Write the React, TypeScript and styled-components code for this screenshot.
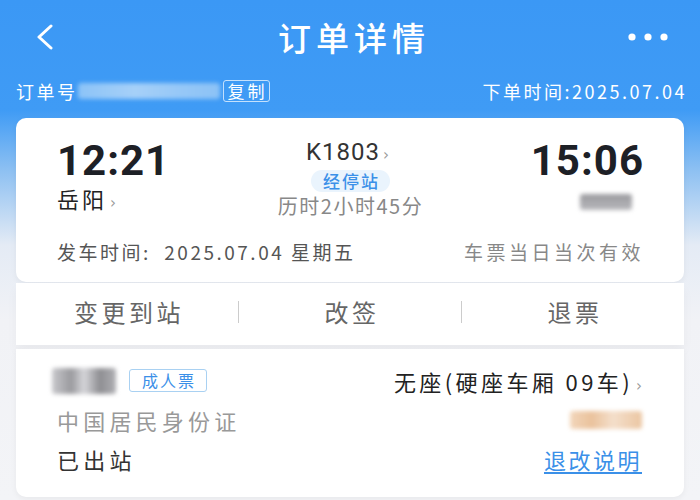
import * as React from 'react';
import styled, { createGlobalStyle } from 'styled-components';

// *** Global ***
const Global = createGlobalStyle`
    html, body {
        margin: 0;
        padding: 0;
    }
    body {
        width: 700px;
        height: 500px;
        overflow: hidden;
        font-family: "Noto Sans CJK SC", "Noto Sans", sans-serif;
        background: linear-gradient(180deg, #3b98f5 0px, #3f9bf5 110px, #8dc0f2 170px, #e4ebf5 245px, #f1f2f6 320px, #f3f4f7 500px);
    }
`

// *** Styled Components ***
const Page = styled.div`
    width: 700px;
    height: 500px;
    display: flex;
    flex-direction: column;
`
const NavBar = styled.div`
    height: 74px;
    display: flex;
    align-items: center;
    justify-content: space-between;
    padding: 0 32px 0 34px;
    color: #fff;
`
const NavTitle = styled.div`
    font-size: 33px;
    font-weight: 500;
    letter-spacing: 5px;
    margin-left: 6px;
`
const NavIcon = styled.div`
    width: 40px;
    display: flex;
    align-items: center;
`
const OrderBar = styled.div`
    height: 34px;
    padding: 0 13px 0 16px;
    display: flex;
    align-items: center;
    justify-content: space-between;
    color: #fff;
    font-size: 18px;
    letter-spacing: 2.5px;
`
const OrderNo = styled.div`
    display: flex;
    align-items: center;
    letter-spacing: 2.5px;
`
const Blur = styled.div<{ $w: number; $h: number; $bg: string }>`
    width: ${p => p.$w}px;
    height: ${p => p.$h}px;
    background: ${p => p.$bg};
    filter: blur(2px);
    border-radius: 3px;
`
const CopyTag = styled.span`
    border: 1px solid rgba(255,255,255,0.7);
    border-radius: 3px;
    font-size: 17px;
    line-height: 20px;
    padding: 0 1px 0 4px;
    margin-left: 3px;
    letter-spacing: 3px;
`
const Card = styled.div`
    margin: 10px 16px 0;
    background: #fff;
    border-radius: 10px;
    box-shadow: 0 2px 6px rgba(0,0,0,0.05);
`
const TripCard = styled(Card)`
    height: 164px;
    padding: 22px 40px 0 41px;
    box-sizing: border-box;
`
const TripRow = styled.div`
    display: grid;
    grid-template-columns: 1fr 1fr 1fr;
    align-items: start;
`
const Station = styled.div<{ $right?: boolean }>`
    display: flex;
    flex-direction: column;
    align-items: ${p => (p.$right ? 'flex-end' : 'flex-start')};
`
const Time = styled.div`
    font-family: Roboto, "Noto Sans", sans-serif;
    font-size: 42px;
    font-weight: 700;
    color: #1d2026;
    line-height: 42px;
    letter-spacing: 1px;
`
const StationName = styled.div`
    font-size: 22px;
    letter-spacing: 3px;
    color: #222;
    margin-top: 2px;
    line-height: 28px;
`
const Arrow = styled.span`
    font-size: 15px;
    color: #999;
    margin-left: 3px;
    letter-spacing: 0;
    font-family: "DejaVu Sans", sans-serif;
`
const Middle = styled.div`
    display: flex;
    flex-direction: column;
    align-items: center;
    margin-top: -2px;
`
const TrainNo = styled.div`
    font-family: Roboto, "Noto Sans", sans-serif;
    font-size: 24px;
    color: #333;
    line-height: 28px;
    margin-right: 6px;
    letter-spacing: 1px;
`
const StopTag = styled.div`
    margin-top: 1px;
    font-size: 17px;
    font-weight: 500;
    letter-spacing: 2px;
    color: #3b90e8;
    background: #eaf4fd;
    border-radius: 11px;
    padding: 0 10px 0 12px;
    line-height: 22px;
`
const Duration = styled.div`
    font-size: 20px;
    letter-spacing: 1.5px;
    color: #888;
    margin-top: 0;
    line-height: 28px;
`
const InfoRow = styled.div`
    display: flex;
    justify-content: space-between;
    margin-top: 18px;
    font-size: 19px;
    letter-spacing: 2.5px;
    color: #555;
`
const Muted = styled.span`
    color: #888;
    letter-spacing: 3.5px;
`
const ActionBar = styled.div`
    margin: 1px 16px 0;
    height: 62px;
    background: #fff;
    display: flex;
    align-items: center;
    box-shadow: 0 6px 10px rgba(0,0,0,0.04);
`
const Action = styled.div`
    flex: 1;
    text-align: center;
    font-size: 24px;
    letter-spacing: 3.5px;
    color: #666;
    padding-left: 4px;
    margin-top: -6px;
`
const Divider = styled.div`
    width: 1px;
    height: 22px;
    background: #ccc;
    margin-top: -4px;
`
const PassengerCard = styled(Card)`
    margin-top: 4px;
    height: 148px;
    padding: 12px 42px 0 41px;
    box-sizing: border-box;
    border-radius: 0 0 10px 10px;
`
const PRow = styled.div`
    display: flex;
    justify-content: space-between;
    align-items: center;
    height: 39px;
    font-size: 22px;
    letter-spacing: 4.2px;
`
const NameBox = styled.div`
    display: flex;
    align-items: center;
    gap: 13px;
    margin-left: -5px;
`
const TypeTag = styled.span`
    font-size: 16px;
    letter-spacing: 2px;
    color: #3b90e8;
    border: 1px solid #a9d1f2;
    border-radius: 3px;
    padding: 0 10px 0 12px;
    line-height: 21px;
`
const Seat = styled.div`
    color: #222;
    letter-spacing: 3.4px;
`
const IdText = styled.div`
    color: #999;
`
const Status = styled.div`
    color: #333;
`
const Link = styled.a`
    color: #3b90e8;
    text-decoration: underline;
    text-underline-offset: 3px;
    letter-spacing: 2.5px;
`

export default function App() {
    return (
        <Page>
            <Global />
            <NavBar>
                <NavIcon>
                    <svg width="22" height="26" viewBox="0 0 22 26">
                        <path d="M17 2 L5 13 L17 24" fill="none" stroke="#fff" strokeWidth="3" strokeLinecap="round" strokeLinejoin="round" />
                    </svg>
                </NavIcon>
                <NavTitle>订单详情</NavTitle>
                <NavIcon>
                    <svg width="40" height="10" viewBox="0 0 40 10">
                        <circle cx="4" cy="5" r="3.6" fill="#fff" />
                        <circle cx="20" cy="5" r="3.6" fill="#fff" />
                        <circle cx="36" cy="5" r="3.6" fill="#fff" />
                    </svg>
                </NavIcon>
            </NavBar>
            <OrderBar>
                <OrderNo>
                    订单号
                    <Blur $w={142} $h={16} $bg="linear-gradient(90deg, #8cc3f7, #a6d0f8 40%, #97c8f7 70%, #8cc2f6)" />
                    <CopyTag>复制</CopyTag>
                </OrderNo>
                <div>下单时间:2025.07.04</div>
            </OrderBar>
            <TripCard>
                <TripRow>
                    <Station>
                        <Time>12:21</Time>
                        <StationName>岳阳<Arrow>›</Arrow></StationName>
                    </Station>
                    <Middle>
                        <TrainNo>K1803<Arrow>›</Arrow></TrainNo>
                        <StopTag>经停站</StopTag>
                        <Duration>历时2小时45分</Duration>
                    </Middle>
                    <Station $right>
                        <Time>15:06</Time>
                        <div style={{ marginTop: 12, marginRight: 12 }}>
                            <Blur $w={52} $h={16} $bg="linear-gradient(180deg, #9a9a9e, #b8b8bc)" />
                        </div>
                    </Station>
                </TripRow>
                <InfoRow>
                    <span>发车时间:&nbsp; 2025.07.04 星期五</span>
                    <Muted>车票当日当次有效</Muted>
                </InfoRow>
            </TripCard>
            <ActionBar>
                <Action>变更到站</Action>
                <Divider />
                <Action>改签</Action>
                <Divider />
                <Action>退票</Action>
            </ActionBar>
            <PassengerCard>
                <PRow>
                    <NameBox>
                        <Blur $w={64} $h={26} $bg="linear-gradient(90deg, #c8c8cc, #9a9a9e 30%, #d6d6da 50%, #8e8e92 75%, #b0b0b4)" />
                        <TypeTag>成人票</TypeTag>
                    </NameBox>
                    <Seat>无座(硬座车厢 09车)<Arrow>›</Arrow></Seat>
                </PRow>
                <PRow>
                    <IdText>中国居民身份证</IdText>
                    <Blur $w={72} $h={18} $bg="linear-gradient(90deg, #f2d6bb, #eac29c 30%, #f4dfcb 60%, #ebc6a2)" />
                </PRow>
                <PRow>
                    <Status>已出站</Status>
                    <Link>退改说明</Link>
                </PRow>
            </PassengerCard>
        </Page>
    );
}
